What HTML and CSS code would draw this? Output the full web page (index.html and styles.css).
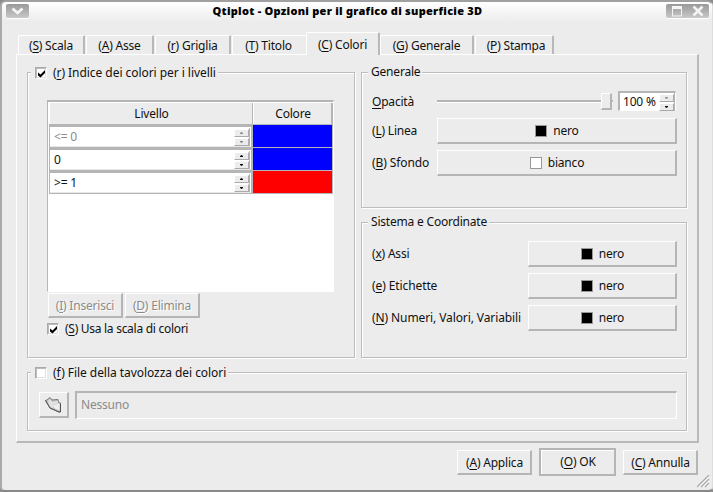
FILE: index.html
```
<!DOCTYPE html>
<html lang="it">
<head>
<meta charset="utf-8">
<title>Qtiplot</title>
<link rel="stylesheet" href="styles.css">
</head>
<body>
<div class="window">
  <header class="titlebar">
    <span class="winbtn menu"><svg width="23" height="14" viewBox="0 0 23 14"><path d="M6.500 4.500l5 4.500 5-4.500" fill="none" stroke="#f4f4f4" stroke-width="2.600"/></svg></span>
    <h1>Qtiplot - Opzioni per il grafico di superficie 3D</h1>
    <span class="winbtn controls"><svg width="43" height="14" viewBox="0 0 43 14"><path d="M6.500 3v9h9V3M6 3h10" fill="none" stroke="#f4f4f4"/><path d="M6 2h10v3H6z" fill="#f4f4f4"/><path d="M27.500 2.500l9 9M36.500 2.500l-9 9" stroke="#f4f4f4" stroke-width="2.600"/></svg></span>
  </header>
  <nav class="tabs">
    <span class="tab t1">(<u>S</u>) Scala</span><span class="tab t2">(<u>A</u>) Asse</span><span class="tab t3">(<u>r</u>) Griglia</span><span class="tab t4">(<u>T</u>) Titolo</span><span class="tab t5 active">(<u>C</u>) Colori</span><span class="tab t6">(<u>G</u>) Generale</span><span class="tab t7">(<u>P</u>) Stampa</span>
  </nav>
  <main class="panel">
    <section class="group levels">
      <div class="legend check-legend"><span class="check"><svg width="9" height="9" viewBox="0 0 9 9"><path d="M1 3.500l2.500 2L8 1v3L3.500 8.500 1 6.500z"/></svg></span><span>(<u>r</u>) Indice dei colori per i livelli</span></div>
      <div class="table">
        <div class="row head"><div class="th">Livello</div><div class="th">Colore</div></div>
        <div class="row"><div class="cell off"><span>&lt;= 0</span><i class="spin"><b></b><b></b></i></div><div class="color blue"></div></div>
        <div class="row"><div class="cell"><span>0</span><i class="spin"><b></b><b></b></i></div><div class="color blue"></div></div>
        <div class="row"><div class="cell"><span>&gt;= 1</span><i class="spin"><b></b><b></b></i></div><div class="color red"></div></div>
      </div>
      <div class="actions"><div class="button off">(<u>I</u>) Inserisci</div><div class="button off">(<u>D</u>) Elimina</div></div>
      <div class="option"><span class="check"><svg width="9" height="9" viewBox="0 0 9 9"><path d="M1 3.500l2.500 2L8 1v3L3.500 8.500 1 6.500z"/></svg></span><span>(<u>S</u>) Usa la scala di colori</span></div>
    </section>
    <section class="group general">
      <div class="legend">Generale</div>
      <div class="field opacity"><label><u>O</u>pacità</label><div class="slider"><i></i></div><div class="number"><span>100 %</span><i class="spin max"><b></b><b></b></i></div></div>
      <div class="field"><label>(<u>L</u>) Linea</label><div class="button"><i class="swatch"></i>nero</div></div>
      <div class="field"><label class="wide">(<u>B</u>) Sfondo</label><div class="button"><i class="swatch white"></i>bianco</div></div>
    </section>
    <section class="group system">
      <div class="legend">Sistema e Coordinate</div>
      <div class="field"><label>(<u>x</u>) Assi</label><div class="button"><i class="swatch"></i>nero</div></div>
      <div class="field"><label class="wide">(<u>e</u>) Etichette</label><div class="button"><i class="swatch"></i>nero</div></div>
      <div class="field"><label class="wide">(<u>N</u>) Numeri, Valori, Variabili</label><div class="button"><i class="swatch"></i>nero</div></div>
    </section>
    <section class="group file">
      <div class="legend check-legend"><span class="check"></span><span>(<u>f</u>) File della tavolozza dei colori</span></div>
      <div class="filerow">
        <div class="button"><svg width="17" height="17" viewBox="0 0 17 17"><path d="M.5 4.500L2 4l3-2.500L7 4l6-.5.5 3 2 .5v8.500l-1.500.5L5 12z" fill="#c4c4c4" stroke="#777"/><path d="M3 5l2-2 2 3 6-1v2L8 9v3L5 11z" fill="#e2e2e2"/><path d="M8 9.500L14.500 7v7.500L9 12z" fill="#eee"/><path d="M.5 4.500L5 12l9 4h1.500V7.500" fill="none" stroke="#555"/></svg></div>
        <div class="path">Nessuno</div>
      </div>
    </section>
  </main>
  <footer class="buttons"><div class="button">(<u>A</u>) Applica</div><div class="button default">(<u>O</u>) OK</div><div class="button">(<u>C</u>) Annulla</div></footer>
  <svg class="grip" width="13" height="13" viewBox="0 0 13 13"><path d="M0 12L12 0M4 12L12 4M8 12l4-4" stroke="#aaa" stroke-width="1.300"/><path d="M2 12L12 2M6 12l6-6M10 12l2-2" stroke="#fff"/></svg>
</div>
</body>
</html>
```
FILE: styles.css
```
* { box-sizing: border-box; }
body { margin: 0; background: #8b8b8b; overflow: hidden; }
.window { position: relative; width: 713px; height: 492px; padding: 0 13px 0 14px; border: 2px solid #aaa; border-top-color: #a0a0a0; border-right: 1px solid #ddd; border-bottom-color: #888; border-radius: 6px 6px 5px 5px; background: linear-gradient(#fff, #ececec 20px); font: 12px/16px "Noto Sans", sans-serif; letter-spacing: -.2px; color: #111; white-space: nowrap; }
u { text-decoration: underline; text-underline-offset: 2px; text-decoration-thickness: 1px; text-decoration-skip-ink: none; }
i, b { display: block; }
.titlebar { display: flex; justify-content: space-between; height: 30px; margin: 0 -10px; padding-top: 2px; }
.titlebar h1 { margin: 0; font: 900 11px/14px "Noto Sans", sans-serif; letter-spacing: .26px; color: #000; }
.winbtn { height: 14px; border-radius: 2px; background: linear-gradient(#999, #c8c8c8); box-shadow: 0 1px #fff; }
.winbtn svg { display: block; }
.tabs { display: flex; align-items: flex-end; height: 22px; padding-left: 2px; }
.tab { height: 19px; border: 1px solid #fff; border-right: 2px solid #b8b8b8; border-bottom: 0; border-radius: 2px 2px 0 0; text-align: center; line-height: 19px; margin-right: 1px; }
.t1 { width: 67px; } .t2 { width: 68px; } .t3 { width: 76px; } .t4 { width: 74px; border-right: 0; margin: 0; padding-right: 2px; } .t5 { width: 74px; } .t6 { width: 94px; } .t7 { width: 79px; padding-left: 4px; }
.tab.active { height: 23px; margin-bottom: -1px; margin-right: 0; line-height: 23px; background: #ececec; z-index: 1; }
.panel { display: grid; grid-template: 136px 136px 59px / 328px 326px; grid-template-areas: "levels general" "levels system" "file file"; gap: 14px 6px; height: 389px; padding: 17px 0 0 10px; border: 1px solid #fff; border-right: 2px solid #b8b8b8; border-bottom: 2px solid #b8b8b8; }
.levels { grid-area: levels; padding: 27px 20px 0; }
.general { grid-area: general; }
.system { grid-area: system; }
.file { grid-area: file; }
.group { border: 1px solid #bdbdbd; box-shadow: inset 1px 1px #fff, 1px 1px #fff; min-width: 0; }
.legend { position: absolute; margin: -9px 0 0 6px; padding: 0 2px 0 3px; height: 16px; background: #ececec; }
.levels .legend { margin-top: -35px; margin-left: -17px; }
.check-legend, .option { display: flex; align-items: center; gap: 6px; }
.check-legend { padding-left: 4px; letter-spacing: -.05px; }
.file .legend { margin-left: 3px; margin-top: -8px; }
.option { letter-spacing: -.28px; }
.check { width: 12px; height: 12px; border: 1px solid #aaa; border-right-color: #fff; border-bottom-color: #fff; background: #fff; box-shadow: inset 1px 1px #bbb, inset -1px -1px #e0e0e0; }
.check svg { display: block; margin: 1px 0 0 1px; }
.table { width: 287px; height: 192px; margin-left: -1px; padding: 1px; border: 1px solid #b5b5b5; border-top-width: 2px; border-right-color: #fff; border-bottom-color: #fff; background: #fff; }
.row { display: grid; grid-template-columns: 204px 79px; height: 23px; border-bottom: 1px solid #b5b5b5; border-right: 1px solid #b5b5b5; width: 284px; }
.head { height: 22px; border-bottom: 2px solid #b5b5b5; }
.th { background: #ececec; border-right: 1px solid #b5b5b5; border-left: 1px solid #fff; text-align: center; line-height: 21px; padding-left: 1px; }
.cell { display: flex; justify-content: space-between; align-items: center; border: 2px solid #b5b5b5; border-width: 2px 2px 0 1px; padding: 0 1px 0 4px; box-shadow: inset 0 -1px #e8e8e8; }
.off { color: #8b8b8b; }
.blue { background: #00f; }
.red { background: #f00; }
.spin { width: 16px; border-right: 1px solid #b5b5b5; }
.spin b { height: 8px; margin-top: 1px; border: 1px solid #fff; border-right-color: #aaa; border-bottom-color: #aaa; background: #ececec; }
.spin b::before { content: ""; display: block; width: 3px; height: 2px; margin: 2px auto 0; background: #111; clip-path: polygon(50% 0, 100% 50%, 100% 100%, 0 100%, 0 50%); }
.spin b + b::before { transform: scaleY(-1); }
.off .spin b::before, .max b:first-child::before { background: #888; }
.actions { display: flex; gap: 2px; margin-top: 1px; }
.button { display: flex; align-items: center; justify-content: center; height: 26px; border: 1px solid #fff; border-right: 2px solid #b5b5b5; border-bottom: 2px solid #b5b5b5; }
.actions .button, .buttons .button { display: block; text-align: center; line-height: 23px; width: 75px; height: 25px; }
.button.off { color: #8b8b8b; }
.actions .button.off { text-shadow: 1px 1px #fff; }
.option { margin: 3px 0 0 -1px; }
.field { display: grid; grid-template-columns: 65px 240px; align-items: center; height: 32px; margin-left: 10px; }
.field .wide { letter-spacing: -.1px; }
.general .opacity { grid-template-columns: 65px 176px 64px; height: 28px; margin-top: 14px; }
.opacity label { padding-top: 1px; }
.number { margin-left: 5px; width: 58px; height: 20px; display: flex; align-items: center; justify-content: space-between; padding: 0 0 0 3px; border: 2px solid #b5b5b5; border-right: 1px solid #fff; border-bottom: 1px solid #fff; background: #fff; }
.slider { display: flex; align-items: center; justify-content: flex-end; padding-right: 1px; height: 17px; background: linear-gradient(#b5b5b5 2px, #fff 2px) 0 7px / 100% 3px no-repeat; }
.slider i { width: 11px; height: 17px; border: 1px solid #fff; border-right: 2px solid #b5b5b5; border-bottom: 2px solid #b5b5b5; background: #ececec; }
.system .field { grid-template-columns: 156px 149px; }
.system .legend + .field { margin-top: 15px; }
.swatch { width: 12px; height: 12px; border: 1px solid #999; background: #000; margin-right: 6px; }
.swatch.white { background: #fff; }
.field .button { padding-left: 1px; }
.filerow { display: flex; gap: 6px; padding: 18px 0 0 11px; align-items: center; }
.filerow .button { width: 30px; }
.path { width: 602px; height: 28px; padding-left: 4px; line-height: 23px; color: #8b8b8b; border: 2px solid #b5b5b5; border-right: 1px solid #fff; border-bottom: 1px solid #fff; }
.buttons { display: flex; justify-content: flex-end; align-items: center; gap: 7px; margin-top: 5px; padding-right: 1px; height: 28px; }
.buttons .button { padding-left: 1px; }
.buttons .default { width: 77px; height: 28px; border: 2px solid #b5b5b5; box-shadow: inset 1px 1px #fff; line-height: 24px; }
.grip { position: absolute; right: 2px; bottom: 2px; }
```
